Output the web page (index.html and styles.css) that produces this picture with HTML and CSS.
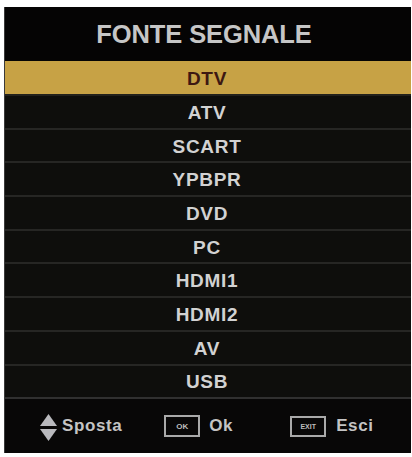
FILE: index.html
```html
<!DOCTYPE html>
<html>
<head>
<meta charset="utf-8">
<link rel="stylesheet" href="styles.css">
</head>
<body>
<div class="panel">
  <div class="title">FONTE SEGNALE</div>
  <div class="list">
    <div class="row sel">DTV</div>
    <div class="row">ATV</div>
    <div class="row">SCART</div>
    <div class="row">YPBPR</div>
    <div class="row">DVD</div>
    <div class="row">PC</div>
    <div class="row">HDMI1</div>
    <div class="row">HDMI2</div>
    <div class="row">AV</div>
    <div class="row last">USB</div>
  </div>
  <div class="footer">
    <div class="hint h-move">
      <svg class="arrows" width="17" height="27" viewBox="0 0 17 27">
        <polygon points="0,12 8.5,0 17,12" fill="#b9b9bd"/>
        <polygon points="0,15 17,15 8.5,27" fill="#b9b9bd"/>
      </svg>
      <span class="lbl">Sposta</span>
    </div>
    <div class="hint h-ok">
      <span class="key">OK</span>
      <span class="lbl">Ok</span>
    </div>
    <div class="hint h-exit">
      <span class="key key-exit">EXIT</span>
      <span class="lbl">Esci</span>
    </div>
  </div>
</div>
</body>
</html>
```

FILE: styles.css
```css
html, body {
  margin: 0;
  padding: 0;
  background: #ffffff;
}
body {
  padding: 7px 1px 4px 4px;
  font-family: "Liberation Sans", Arial, sans-serif;
}
.panel {
  width: 407px;
  height: 446px;
  background: #070606;
  display: flex;
  flex-direction: column;
  border-left: 1px solid #3a3a3a;
  box-sizing: border-box;
}
.title {
  height: 54px;
  display: flex;
  align-items: center;
  justify-content: center;
  color: #c6c6c6;
  font-weight: bold;
  font-size: 25.5px;
  letter-spacing: -0.1px;
  background: #050404;
  padding-top: 1px;
  padding-right: 8px;
  box-sizing: border-box;
}
.list {
  display: flex;
  flex-direction: column;
}
.row {
  height: 33.7px;
  box-sizing: border-box;
  display: flex;
  align-items: center;
  justify-content: center;
  color: #d2d2d2;
  font-weight: bold;
  font-size: 19px;
  letter-spacing: 0.7px;
  background: #0e0e0c;
  border-bottom: 2px solid #262624;
  padding-top: 2px;
  padding-right: 2px;
}
.row.sel {
  height: 35px;
  background: #c7a245;
  color: #3d1812;
  border-bottom: 2px solid #22211c;
}
.row.last {
  border-bottom: 2px solid #303030;
}
.footer {
  flex: 1;
  display: flex;
  align-items: center;
  padding-left: 35px;
  background: #080707;
}
.hint {
  display: flex;
  align-items: center;
}
.h-ok {
  margin-left: 42px;
}
.h-exit {
  margin-left: 57px;
}
.arrows {
  display: block;
  margin-right: 5px;
  margin-top: 2px;
}
.lbl {
  color: #c4c4c4;
  font-weight: bold;
  font-size: 17px;
  letter-spacing: 0.6px;
}
.key {
  width: 36px;
  height: 22px;
  box-sizing: border-box;
  border: 2px solid #a9a9a9;
  display: flex;
  align-items: center;
  justify-content: center;
  color: #bdbdbd;
  font-size: 8px;
  font-weight: bold;
  margin-right: 9px;
}
.key-exit {
  height: 21px;
  margin-right: 10px;
  font-size: 7px;
}
```
